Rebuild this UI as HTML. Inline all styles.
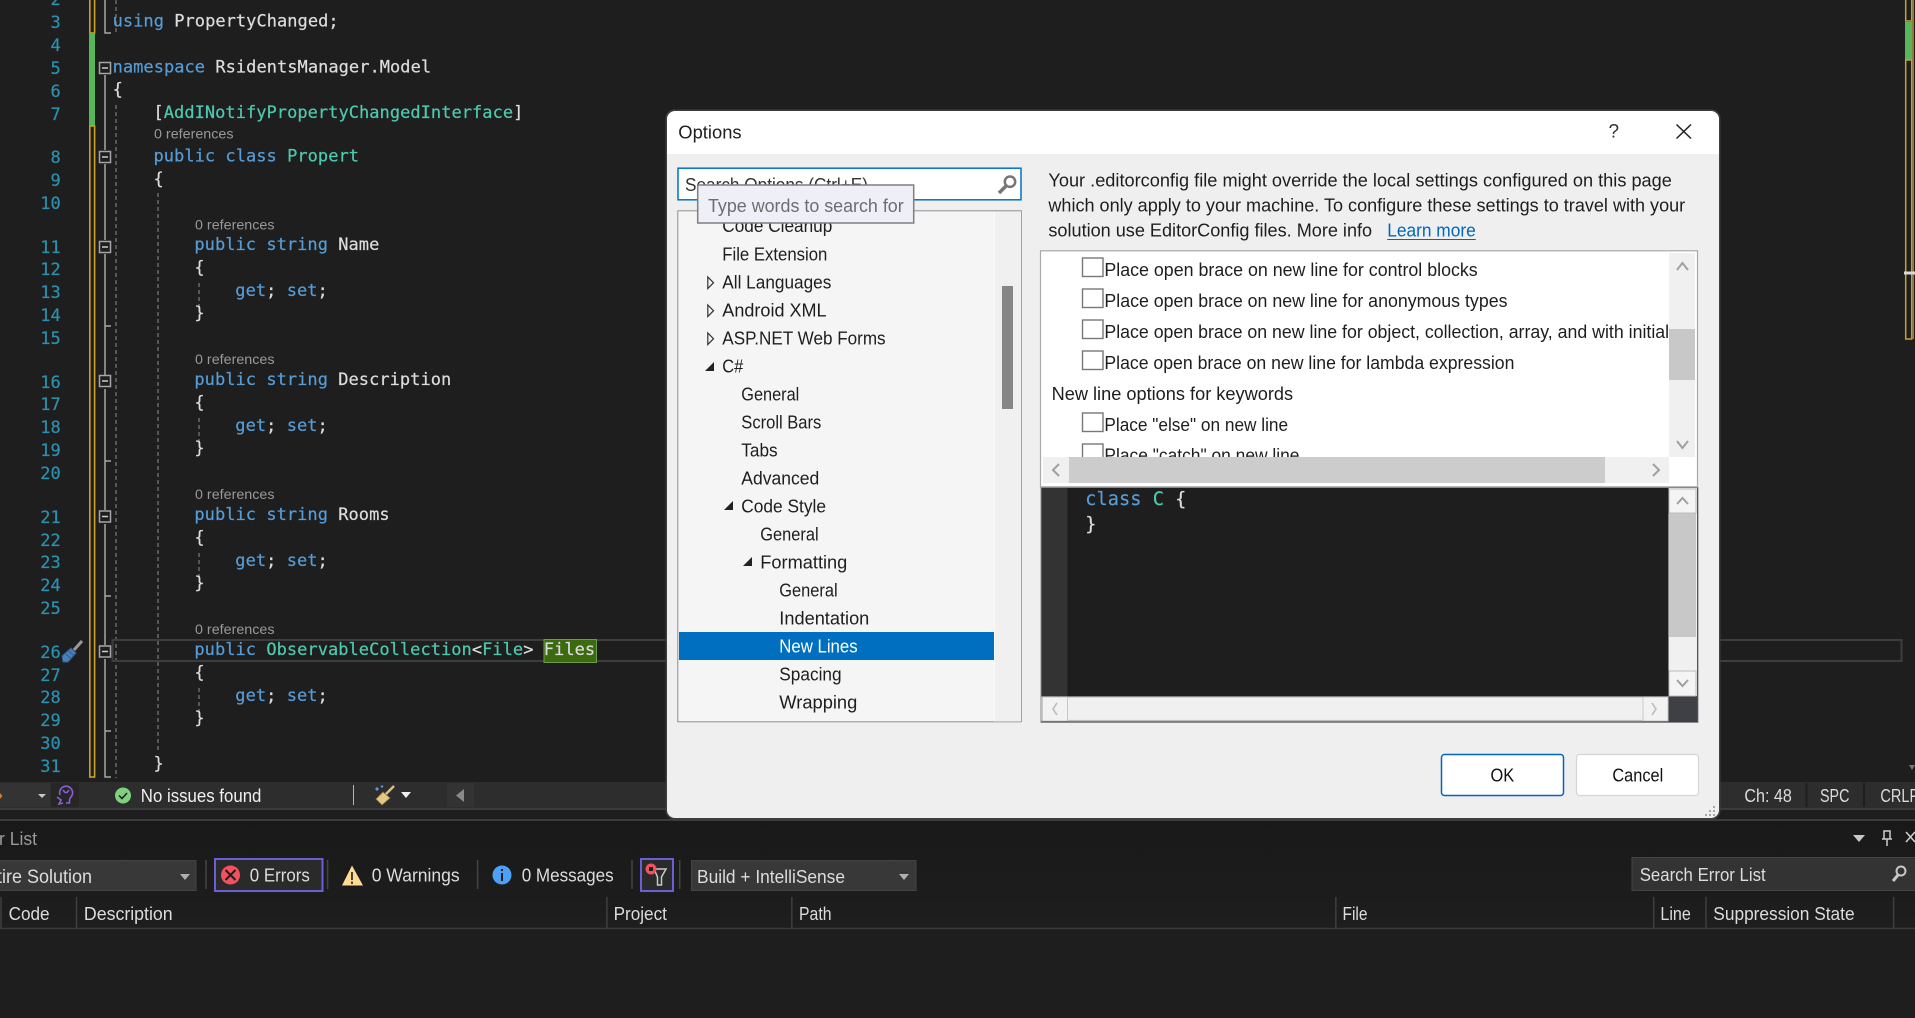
<!DOCTYPE html>
<html><head><meta charset="utf-8"><title>Options</title>
<style>
html,body{margin:0;padding:0;background:#1e1e1e;width:1915px;height:1018px;overflow:hidden}
svg{display:block;position:absolute;left:0;top:0}
text{white-space:pre}
.c{font-family:"DejaVu Sans Mono","Liberation Mono",monospace;font-size:17px;fill:#dcdcdc;stroke:#dcdcdc;stroke-width:.22;letter-spacing:.04px}
.n{font-family:"DejaVu Sans Mono","Liberation Mono",monospace;font-size:17px;fill:#2b91af;stroke:#2b91af;stroke-width:.22;letter-spacing:-.03px}
.k{fill:#569cd6;stroke:#569cd6}.t{fill:#4ec9b0;stroke:#4ec9b0}
.r{font-family:"Liberation Sans",sans-serif;font-size:14px;fill:#999}
.u{font-family:"Liberation Sans",sans-serif;font-size:18px;fill:#1e1e1e}
.d{font-family:"Liberation Sans",sans-serif;font-size:18px;fill:#dcdcdc}
.g{stroke:#6a6a6a;stroke-width:1.5;stroke-dasharray:4 3;fill:none}
.b{fill:#1e1e1e;stroke:#a5a5a5;stroke-width:1.5}
.o{stroke:#a5a5a5;stroke-width:1.5;fill:none}
.s{stroke:#444;stroke-width:1.5}
.h{stroke:#3f3f3f;stroke-width:1.5}
.chev{fill:none;stroke:#a0a0a0;stroke-width:2}
</style></head><body>
<svg width="1915" height="1018" viewBox="0 0 1915 1018" xmlns="http://www.w3.org/2000/svg">
<defs>
<linearGradient id="bp" x1="0" y1="0" x2="0" y2="1"><stop offset="0" stop-color="#191919"/><stop offset="1" stop-color="#1e1e1e"/></linearGradient>
<clipPath id="opt"><rect x="1042" y="252" width="627" height="205"/></clipPath>
</defs>
<rect width="1915" height="1018" fill="#1e1e1e"/>

<!-- margin bars -->
<rect x="89.8" y="-2" width="4.8" height="35" fill="none" stroke="#c9a227" stroke-width="1.6"/>
<rect x="89" y="33" width="6" height="93" fill="#57b65a"/>
<rect x="89.8" y="126" width="4.8" height="651" fill="none" stroke="#c9a227" stroke-width="1.6"/>

<!-- outline -->
<path class="o" d="M105 0V33H111M105 75V150M105 164V240M105 254V375M105 389V510M105 524V645M105 659V777H111M105 326H111M105 461H111M105 596H111M105 731H111"/>
<path class="g" d="M116 0V33M116 105V778M158 193V753M199 283V310M199 418V445M199 553V580M199 688V715"/>
<g>
<rect class="b" x="99.5" y="62.5" width="11" height="11"/><path d="M102 68H108" stroke="#ccc" stroke-width="1.5"/>
<rect class="b" x="99.5" y="151.5" width="11" height="11"/><path d="M102 157H108" stroke="#ccc" stroke-width="1.5"/>
<rect class="b" x="99.5" y="241.5" width="11" height="11"/><path d="M102 247H108" stroke="#ccc" stroke-width="1.5"/>
<rect class="b" x="99.5" y="375.5" width="11" height="11"/><path d="M102 381H108" stroke="#ccc" stroke-width="1.5"/>
<rect class="b" x="99.5" y="511" width="11" height="11"/><path d="M102 516.5H108" stroke="#ccc" stroke-width="1.5"/>
<rect class="b" x="99.5" y="646" width="11" height="11"/><path d="M102 651.5H108" stroke="#ccc" stroke-width="1.5"/>
</g>

<!-- current line box -->
<rect x="112.5" y="640" width="1789" height="21" fill="none" stroke="#3d3d3d" stroke-width="2"/>
<rect x="544" y="639.5" width="52.5" height="23" fill="#3c6a0f" stroke="#6b9a52" stroke-width="1"/>

<!-- line numbers -->
<g>
<text class="n" x="50.5" y="5">2</text><text class="n" x="50.5" y="28">3</text><text class="n" x="50.5" y="51">4</text><text class="n" x="50.5" y="74">5</text><text class="n" x="50.5" y="97">6</text><text class="n" x="50.5" y="120">7</text><text class="n" x="50.5" y="163">8</text><text class="n" x="50.5" y="186">9</text>
<text class="n" x="40.3" y="209">10</text><text class="n" x="40.3" y="253">11</text><text class="n" x="40.3" y="275">12</text><text class="n" x="40.3" y="298">13</text><text class="n" x="40.3" y="321">14</text><text class="n" x="40.3" y="344">15</text><text class="n" x="40.3" y="388">16</text><text class="n" x="40.3" y="410">17</text><text class="n" x="40.3" y="433">18</text><text class="n" x="40.3" y="456">19</text><text class="n" x="40.3" y="479">20</text><text class="n" x="40.3" y="523">21</text><text class="n" x="40.3" y="546">22</text><text class="n" x="40.3" y="568">23</text><text class="n" x="40.3" y="591">24</text><text class="n" x="40.3" y="614">25</text><text class="n" x="40.3" y="658">26</text><text class="n" x="40.3" y="681">27</text><text class="n" x="40.3" y="703">28</text><text class="n" x="40.3" y="726">29</text><text class="n" x="40.3" y="749">30</text><text class="n" x="40.3" y="772">31</text>
</g>
<!-- screwdriver icon -->
<g transform="translate(62,641)"><path d="M20 0L12 9" stroke="#9a9a9a" stroke-width="3" fill="none"/><path d="M0 15L9 7L14 12L6 21L1 21Z" fill="#4a7fb8" stroke="#2c5e94" stroke-width="1"/><path d="M4 13L9 18M7 10L12 15" stroke="#2c5e94" stroke-width="1"/></g>

<!-- code -->
<text class="c" x="112.6" y="26.5"><tspan class="k">using</tspan> PropertyChanged;</text>
<text class="c" x="112.6" y="72.5"><tspan class="k">namespace</tspan> RsidentsManager.Model</text>
<text class="c" x="112.6" y="95">{</text>
<text class="c" x="153.5" y="118">[<tspan class="t">AddINotifyPropertyChangedInterface</tspan>]</text>
<text class="r" x="154" y="138.5" textLength="79.5" lengthAdjust="spacingAndGlyphs">0 references</text>
<text class="c" x="153.5" y="161.7"><tspan class="k">public class</tspan> <tspan class="t">Propert</tspan></text>
<text class="c" x="153.5" y="184.5">{</text>

<text class="r" x="195" y="229.3" textLength="79.5" lengthAdjust="spacingAndGlyphs">0 references</text>
<text class="c" x="194.4" y="250"><tspan class="k">public string</tspan> Name</text>
<text class="c" x="194.4" y="273">{</text>
<text class="c" x="235.3" y="296"><tspan class="k">get</tspan>; <tspan class="k">set</tspan>;</text>
<text class="c" x="194.4" y="318.5">}</text>

<text class="r" x="195" y="364" textLength="79.5" lengthAdjust="spacingAndGlyphs">0 references</text>
<text class="c" x="194.4" y="385"><tspan class="k">public string</tspan> Description</text>
<text class="c" x="194.4" y="408">{</text>
<text class="c" x="235.3" y="431"><tspan class="k">get</tspan>; <tspan class="k">set</tspan>;</text>
<text class="c" x="194.4" y="453.5">}</text>

<text class="r" x="195" y="499" textLength="79.5" lengthAdjust="spacingAndGlyphs">0 references</text>
<text class="c" x="194.4" y="520"><tspan class="k">public string</tspan> Rooms</text>
<text class="c" x="194.4" y="543">{</text>
<text class="c" x="235.3" y="566"><tspan class="k">get</tspan>; <tspan class="k">set</tspan>;</text>
<text class="c" x="194.4" y="588.5">}</text>

<text class="r" x="195" y="634" textLength="79.5" lengthAdjust="spacingAndGlyphs">0 references</text>
<text class="c" x="194.4" y="655"><tspan class="k">public</tspan> <tspan class="t">ObservableCollection</tspan>&lt;<tspan class="t">File</tspan>&gt; Files</text>
<text class="c" x="194.4" y="678">{</text>
<text class="c" x="235.3" y="701"><tspan class="k">get</tspan>; <tspan class="k">set</tspan>;</text>
<text class="c" x="194.4" y="723.5">}</text>
<text class="c" x="153.5" y="769">}</text>

<!-- right margin -->
<rect x="1905.7" y="-2" width="6" height="23" fill="none" stroke="#c9a227" stroke-width="1.5"/>
<rect x="1905" y="22" width="7" height="38" fill="#57b65a"/>
<rect x="1905.7" y="60" width="6" height="279" fill="none" stroke="#c9a227" stroke-width="1.5"/>
<rect x="1912" y="0" width="2" height="339" fill="#8c7c3c"/>
<rect x="1904" y="271.5" width="11" height="3" fill="#d8d8d8"/>
<path d="M1909 765L1915 765L1912 770Z" fill="#777"/>

<!-- status bar -->
<rect x="0" y="782" width="1915" height="26" fill="#2d2d2d"/>
<rect x="0" y="808" width="1915" height="2" fill="#3a3a3a"/>
<rect x="0" y="819" width="1915" height="2" fill="#3c3c3c"/>
<rect x="0" y="821" width="1915" height="110" fill="url(#bp)"/>
<rect x="0" y="783" width="50" height="24" fill="#333"/>
<path d="M0 793L2.5 796L0 799Z" fill="#d87a30"/>
<path d="M38 794H46L42 798Z" fill="#c8c8c8"/>
<rect x="51" y="783" width="28" height="24" fill="#262626"/>
<g fill="none" stroke="#8a5fd0" stroke-width="1.6"><path d="M60 795a6.5 6.5 0 1 1 11 2c-1 1-1.5 2-1.5 3V803H66"/><path d="M57 797L61 800L59 804L63 803"/><path d="M63 790L65 792.5L67 792.5L69 790"/></g>
<circle cx="123" cy="795.5" r="8" fill="#7fd07f"/><path d="M119 795.5L122 798.5L127 793" fill="none" stroke="#1e1e1e" stroke-width="1.5"/>
<text class="d" x="140.8" y="802" textLength="120.6" lengthAdjust="spacingAndGlyphs" style="fill:#f0f0f0">No issues found</text>
<path d="M353.5 785V805" stroke="#b5b5b5" stroke-width="1"/>
<g><path d="M394 786L384 796" stroke="#d8c08a" stroke-width="2.5"/><path d="M376 799L383 792L390 798L382 805Z" fill="#e5c884" stroke="#8d7440" stroke-width=".8"/><path d="M377 787L379 789L377 791L375 789Z" fill="#5a9be0"/><path d="M382 785L383.5 786.5L382 788L380.5 786.5Z" fill="#5a9be0"/></g>
<path d="M401 792H411L406 798Z" fill="#f0f0f0"/>
<rect x="447" y="783" width="27" height="24" fill="#333"/>
<path d="M464 789V802L456 795.5Z" fill="#8a8a8a"/>
<text class="d" x="1744.4" y="802" textLength="47.4" lengthAdjust="spacingAndGlyphs">Ch: 48</text>
<path d="M1806.5 783V807M1864 783V807" stroke="#1e1e1e" stroke-width="2"/>
<text class="d" x="1820" y="802" textLength="29.4" lengthAdjust="spacingAndGlyphs">SPC</text>
<text class="d" x="1880.4" y="802" textLength="38" lengthAdjust="spacingAndGlyphs">CRLF</text>

<!-- error list -->
<text class="d" x="-1" y="845" textLength="38" lengthAdjust="spacingAndGlyphs" style="fill:#9a9a9a">r List</text>
<path d="M1853 835H1865L1859 842Z" fill="#c8c8c8"/>
<path d="M1884 831H1890V839H1884ZM1887 839V846M1882 839H1892" fill="none" stroke="#d0d0d0" stroke-width="1.5"/>
<path d="M1906 832L1915 842M1915 832L1906 842" stroke="#d0d0d0" stroke-width="1.5"/>

<rect x="-2" y="860.5" width="198" height="30" fill="#383838" stroke="#434343"/>
<text class="d" x="-3" y="883" textLength="95" lengthAdjust="spacingAndGlyphs" style="font-size:19px">tire Solution</text>
<path d="M180 874H190L185 880Z" fill="#b0b0b0"/>
<path class="s" d="M206 860V889"/>
<rect x="215" y="859" width="107.5" height="32" fill="#2a2a2a" stroke="#6a5fd6" stroke-width="2"/>
<circle cx="230.5" cy="875" r="9.5" fill="#f4515f"/><path d="M225.5 870L235.5 880M235.5 870L225.5 880" stroke="#1e1e1e" stroke-width="2"/>
<text class="d" x="249.8" y="881.7" textLength="60" lengthAdjust="spacingAndGlyphs">0 Errors</text>
<path class="s" d="M327.6 860V889"/>
<path d="M352 865.5L363 885.5H342Z" fill="#ffdc96"/><path d="M352 872V880M352 881.5V884" stroke="#1e1e1e" stroke-width="1.6"/>
<text class="d" x="371.7" y="881.7" textLength="88" lengthAdjust="spacingAndGlyphs">0 Warnings</text>
<path class="s" d="M477.6 860V889"/>
<circle cx="502" cy="875" r="9.5" fill="#4ca1f7"/><path d="M502 873V881M502 869V871" stroke="#1e1e1e" stroke-width="2"/>
<text class="d" x="521.7" y="881.7" textLength="92" lengthAdjust="spacingAndGlyphs">0 Messages</text>
<path class="s" d="M632 860V889"/>
<rect x="641" y="859" width="32" height="32" fill="#2a2a2a" stroke="#6a5fd6" stroke-width="2"/>
<path d="M654 869H666L661.5 877V885H657.5V877Z" fill="none" stroke="#c8c8c8" stroke-width="1.5"/>
<circle cx="651" cy="869" r="5.5" fill="#f4515f"/><rect x="649" y="867" width="4" height="4" fill="#1e1e1e"/>
<path class="s" d="M679.7 860V889"/>
<rect x="691.5" y="860.5" width="224.5" height="30" fill="#383838" stroke="#434343"/>
<text class="d" x="697" y="883" textLength="148" lengthAdjust="spacingAndGlyphs">Build + IntelliSense</text>
<path d="M899 874H909L904 880Z" fill="#b0b0b0"/>

<rect x="1632" y="857.5" width="285" height="33" fill="#333" stroke="#434343"/>
<text class="d" x="1639.7" y="881" textLength="126" lengthAdjust="spacingAndGlyphs">Search Error List</text>
<circle cx="1901" cy="871" r="4.5" fill="none" stroke="#c8c8c8" stroke-width="2"/><path d="M1898 875L1893 881" stroke="#c8c8c8" stroke-width="3"/>

<path class="h" d="M1 897V928M76.5 897V928M606.9 897V928M791.8 897V928M1335.8 897V928M1653.7 897V928M1706 897V928M1893.6 897V928"/>
<path d="M0 928.5H1915" stroke="#3a3a3a" stroke-width="1.5"/>
<text class="d" x="8.6" y="920" textLength="41" lengthAdjust="spacingAndGlyphs">Code</text>
<text class="d" x="83.9" y="920" textLength="88.8" lengthAdjust="spacingAndGlyphs">Description</text>
<text class="d" x="613.6" y="920" textLength="53.3" lengthAdjust="spacingAndGlyphs">Project</text>
<text class="d" x="799" y="920" textLength="32.5" lengthAdjust="spacingAndGlyphs">Path</text>
<text class="d" x="1342.5" y="920" textLength="25" lengthAdjust="spacingAndGlyphs">File</text>
<text class="d" x="1660.4" y="920" textLength="30.4" lengthAdjust="spacingAndGlyphs">Line</text>
<text class="d" x="1713.3" y="920" textLength="141.3" lengthAdjust="spacingAndGlyphs">Suppression State</text>

<!-- DIALOG -->
<rect x="665.5" y="109.5" width="1055" height="710" rx="9" fill="#3e3e3e"/>
<path d="M667 154V119a8 8 0 0 1 8-8H1711a8 8 0 0 1 8 8V154Z" fill="#fff"/>
<path d="M667 154H1719V810a8 8 0 0 1-8 8H675a8 8 0 0 1-8-8Z" fill="#efefef"/>
<text class="u" x="678.3" y="138.5" textLength="63.3" lengthAdjust="spacingAndGlyphs">Options</text>
<text class="u" x="1608.5" y="137.5" style="font-size:19px;fill:#333">?</text>
<path d="M1676.5 124.5L1691 138.5M1691 124.5L1676.5 138.5" stroke="#222" stroke-width="1.5"/>

<!-- search -->
<rect x="678" y="168.2" width="343" height="31.6" fill="#fff" stroke="#0071c5" stroke-width="1.5"/>
<text class="u" x="685" y="191" textLength="183" lengthAdjust="spacingAndGlyphs" style="fill:#333">Search Options (Ctrl+E)</text>
<circle cx="1010" cy="181.7" r="5.2" fill="none" stroke="#767676" stroke-width="2.5"/><path d="M1006 186L999 193" stroke="#767676" stroke-width="3.5"/>

<!-- tree -->
<rect x="677.8" y="210.8" width="343.5" height="511" fill="#f5f5f5" stroke="#8e8f96" stroke-width="1"/>
<rect x="995" y="211.5" width="26" height="510" fill="#f0f0f0"/>
<path d="M994.5 211.5V721.5" stroke="#fafafa"/>
<rect x="1002" y="286" width="11" height="123" fill="#868686"/>
<rect x="679" y="632" width="315" height="28" fill="#006fbf"/>
<g transform="translate(0,-1)">
<text class="u" x="722.3" y="233" textLength="110" lengthAdjust="spacingAndGlyphs">Code Cleanup</text>
<text class="u" x="722.3" y="261.3" textLength="105" lengthAdjust="spacingAndGlyphs">File Extension</text>
<text class="u" x="722.3" y="289.3" textLength="109" lengthAdjust="spacingAndGlyphs">All Languages</text>
<text class="u" x="722.3" y="317.3" textLength="104.3" lengthAdjust="spacingAndGlyphs">Android XML</text>
<text class="u" x="722.3" y="345.3" textLength="163.3" lengthAdjust="spacingAndGlyphs">ASP.NET Web Forms</text>
<text class="u" x="722.3" y="373.3" textLength="21" lengthAdjust="spacingAndGlyphs">C#</text>
<text class="u" x="741.3" y="401.3" textLength="58" lengthAdjust="spacingAndGlyphs">General</text>
<text class="u" x="741.3" y="429.3" textLength="80" lengthAdjust="spacingAndGlyphs">Scroll Bars</text>
<text class="u" x="741.3" y="457.3" textLength="36.3" lengthAdjust="spacingAndGlyphs">Tabs</text>
<text class="u" x="741.3" y="485.3" textLength="78" lengthAdjust="spacingAndGlyphs">Advanced</text>
<text class="u" x="741.3" y="513.3" textLength="84.7" lengthAdjust="spacingAndGlyphs">Code Style</text>
<text class="u" x="760.3" y="541.3" textLength="58.3" lengthAdjust="spacingAndGlyphs">General</text>
<text class="u" x="760.3" y="569.3" textLength="87" lengthAdjust="spacingAndGlyphs">Formatting</text>
<text class="u" x="779.3" y="597.3" textLength="58.3" lengthAdjust="spacingAndGlyphs">General</text>
<text class="u" x="779.3" y="625.3" textLength="90" lengthAdjust="spacingAndGlyphs">Indentation</text>
<text class="u" x="779.3" y="653.3" textLength="78.3" lengthAdjust="spacingAndGlyphs" style="fill:#fff">New Lines</text>
<text class="u" x="779.3" y="681.3" textLength="62.3" lengthAdjust="spacingAndGlyphs">Spacing</text>
<text class="u" x="779.3" y="709.3" textLength="78" lengthAdjust="spacingAndGlyphs">Wrapping</text>
</g>
<g fill="none" stroke="#333" stroke-width="1.2">
<path d="M707.8 277V288.5L713.5 282.7Z"/><path d="M707.8 305V316.5L713.5 310.7Z"/><path d="M707.8 333V344.5L713.5 338.7Z"/>
</g>
<path d="M714 362V371H705Z" fill="#222"/><path d="M733 501V510H724Z" fill="#222"/><path d="M752 557V566H743Z" fill="#222"/>

<!-- tooltip -->
<rect x="697.7" y="185" width="216" height="38" fill="#eff0f7" stroke="#7f7f7f" stroke-width="1.5"/>
<text class="u" x="708" y="212" textLength="195.7" lengthAdjust="spacingAndGlyphs" style="fill:#6d6d72">Type words to search for</text>

<!-- description -->
<text class="u" x="1048.4" y="186.5" textLength="623.5" lengthAdjust="spacingAndGlyphs">Your .editorconfig file might override the local settings configured on this page</text>
<text class="u" x="1048.4" y="211.5" textLength="636.8" lengthAdjust="spacingAndGlyphs">which only apply to your machine. To configure these settings to travel with your</text>
<text class="u" x="1048.4" y="236.5" textLength="323.7" lengthAdjust="spacingAndGlyphs">solution use EditorConfig files. More info</text>
<text class="u" x="1387.2" y="236.5" textLength="88.6" lengthAdjust="spacingAndGlyphs" style="fill:#0067c0">Learn more</text>
<path d="M1387.2 239.5H1475.8" stroke="#0067c0" stroke-width="1"/>

<!-- options panel -->
<rect x="1040.5" y="250.8" width="657" height="236" fill="#fff" stroke="#a9a9ad" stroke-width="1.2"/>
<g clip-path="url(#opt)">
<g fill="#fff" stroke="#777" stroke-width="1.4">
<rect x="1082.5" y="258" width="20.5" height="18.5"/><rect x="1082.5" y="289" width="20.5" height="18.5"/><rect x="1082.5" y="320" width="20.5" height="18.5"/><rect x="1082.5" y="351" width="20.5" height="18.5"/><rect x="1082.5" y="413" width="20.5" height="18.5"/><rect x="1082.5" y="444" width="20.5" height="18.5"/>
</g>
<text class="u" x="1104.4" y="276" textLength="373.3" lengthAdjust="spacingAndGlyphs">Place open brace on new line for control blocks</text>
<text class="u" x="1104.4" y="307" textLength="403.1" lengthAdjust="spacingAndGlyphs">Place open brace on new line for anonymous types</text>
<text class="u" x="1104.4" y="338" textLength="564.7" lengthAdjust="spacingAndGlyphs">Place open brace on new line for object, collection, array, and with initial</text>
<text class="u" x="1104.4" y="369" textLength="410" lengthAdjust="spacingAndGlyphs">Place open brace on new line for lambda expression</text>
<text class="u" x="1051.6" y="400" textLength="241.5" lengthAdjust="spacingAndGlyphs">New line options for keywords</text>
<text class="u" x="1104.4" y="431" textLength="183.7" lengthAdjust="spacingAndGlyphs">Place "else" on new line</text>
<text class="u" x="1104.4" y="461.5" textLength="195.1" lengthAdjust="spacingAndGlyphs">Place "catch" on new line</text>
</g>
<rect x="1669" y="253" width="26" height="204" fill="#f0f0f0"/>
<rect x="1669" y="329" width="26" height="51" fill="#c8c8c8"/>
<path class="chev" d="M1677 270L1682.4 263L1688 270"/><path class="chev" d="M1677 441L1682.4 448L1688 441"/>
<rect x="1043" y="457" width="626" height="26" fill="#f0f0f0"/>
<rect x="1069" y="457" width="536" height="26" fill="#ccc"/>
<path class="chev" d="M1059 464L1053 470L1059 476"/><path class="chev" d="M1653 464L1659 470L1653 476"/>

<!-- preview -->
<rect x="1041" y="487.5" width="657" height="235" fill="#1e1e1e" stroke="#8a8a8e" stroke-width="1"/>
<rect x="1041.5" y="488" width="26" height="208.5" fill="#333"/>
<text class="c" x="1085.3" y="505" style="font-size:18.6px"><tspan class="k">class</tspan> <tspan class="t">C</tspan> {</text>
<text class="c" x="1085.3" y="530" style="font-size:18.6px">}</text>
<rect x="1668.5" y="488" width="28.5" height="208" fill="#f0f0f0"/>
<rect x="1669" y="513" width="27" height="124" fill="#c8c8c8"/>
<rect x="1669" y="489" width="27" height="24" fill="#f4f4f4" stroke="#bbb"/>
<rect x="1669" y="671" width="27" height="25" fill="#f4f4f4" stroke="#bbb"/>
<path class="chev" d="M1677 504L1682.5 498L1688 504"/><path class="chev" d="M1677 680L1682.5 686L1688 680"/>
<rect x="1041.5" y="696.5" width="627" height="25" fill="#f0f0f0"/>
<path d="M1041.5 697H1668M1041.5 720.5H1668" stroke="#bdbdbd" stroke-width="1.2"/>
<rect x="1042.5" y="697" width="25" height="24" fill="#f2f2f2" stroke="#c8c8c8"/>
<rect x="1643" y="697" width="25" height="24" fill="#f2f2f2" stroke="#c8c8c8"/>
<path d="M1057 703L1053 709L1057 715M1652 703L1656 709L1652 715" fill="none" stroke="#bdbdbd" stroke-width="1.6"/>
<rect x="1668.5" y="696.5" width="28.5" height="25.5" fill="#3f3f46"/>

<!-- buttons -->
<rect x="1441.5" y="754.5" width="122" height="41" rx="3" fill="#fff" stroke="#0067c0" stroke-width="1.5"/>
<rect x="1576.5" y="754.5" width="122" height="41" rx="3" fill="#fff" stroke="#d5d5d5" stroke-width="1.2"/>
<text class="u" x="1490.5" y="781.7" textLength="23.7" lengthAdjust="spacingAndGlyphs" style="fill:#111">OK</text>
<text class="u" x="1612.4" y="781.7" textLength="50.8" lengthAdjust="spacingAndGlyphs" style="fill:#111">Cancel</text>
<g fill="#a8a8a8"><rect x="1713" y="806" width="2" height="2"/><rect x="1713" y="810" width="2" height="2"/><rect x="1709" y="810" width="2" height="2"/><rect x="1713" y="814" width="2" height="2"/><rect x="1709" y="814" width="2" height="2"/><rect x="1705" y="814" width="2" height="2"/></g>
</svg>
</body></html>
